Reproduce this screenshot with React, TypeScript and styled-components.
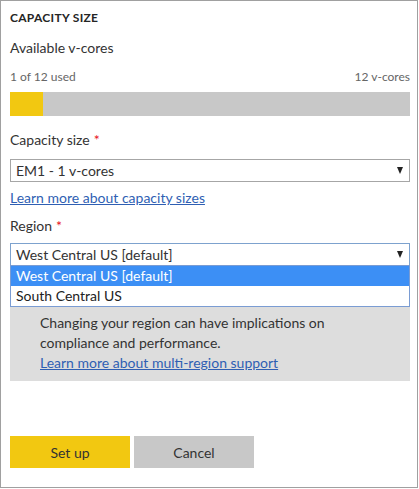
import React from "react";
import styled, { createGlobalStyle } from "styled-components";

const Global = createGlobalStyle`
  html, body { margin: 0; padding: 0; background: #ffffff; }
  body { font-family: "Segoe UI", "Lato", "Noto Sans", sans-serif; color: #333333; }
`;

const Frame = styled.div`
  box-sizing: border-box;
  width: 418px;
  height: 488px;
  border: 1px solid #a0a0a0;
  padding: 9px 7px 0 9px;
  display: flex;
  flex-direction: column;
`;

const Heading = styled.div`
  font-size: 12px;
  font-weight: 700;
  line-height: 16px;
  letter-spacing: 0.3px;
  color: #252525;
`;

const Label = styled.div<{ $mt: number }>`
  margin-top: ${(p) => p.$mt}px;
  font-size: 14px;
  line-height: 20px;
  color: #333333;
`;

const Req = styled.span`
  color: #e81123;
  margin-left: 4px;
`;

const UsageRow = styled.div`
  margin-top: 11px;
  display: flex;
  justify-content: space-between;
  font-size: 12px;
  line-height: 16px;
  color: #666666;
`;

const Bar = styled.div`
  margin-top: 7px;
  height: 24px;
  background: #c8c8c8;
  display: flex;
`;

const BarFill = styled.div`
  background: #f2c811;
  height: 100%;
`;

const Select = styled.div<{ $focus?: boolean; $mt: number }>`
  position: relative;
  box-sizing: border-box;
  margin-top: ${(p) => p.$mt}px;
  height: 23px;
  border: 1px solid ${(p) => (p.$focus ? "#7da2ce" : "#a6a6a6")};
  display: flex;
  align-items: center;
  justify-content: space-between;
  padding: 0 6px 0 5px;
  font-size: 14px;
  color: #333333;
  background: #ffffff;
`;

const Arrow = styled.span`
  width: 0;
  height: 0;
  border-left: 3.5px solid transparent;
  border-right: 3.5px solid transparent;
  border-top: 7px solid #222222;
`;

const Menu = styled.div`
  position: absolute;
  left: -1px;
  right: -1px;
  top: 100%;
  box-sizing: border-box;
  border: 1px solid #7a9cd3;
  background: #ffffff;
  z-index: 2;
`;

const Option = styled.div<{ $active?: boolean }>`
  height: 20px;
  line-height: 20px;
  padding-left: 5px;
  font-size: 14px;
  color: ${(p) => (p.$active ? "#ffffff" : "#222222")};
  background: ${(p) => (p.$active ? "#3c8ff5" : "#ffffff")};
`;

const Link = styled.a<{ $mt?: number }>`
  display: block;
  margin-top: ${(p) => p.$mt ?? 0}px;
  font-size: 14px;
  line-height: 20px;
  color: #2f5fb3;
  text-decoration: underline;
  cursor: pointer;
`;

const InfoBox = styled.div`
  margin-top: 19px;
  background: #dddddd;
  padding: 28px 10px 8px 30px;
  font-size: 14px;
  line-height: 20px;
  color: #333333;
`;

const Buttons = styled.div`
  margin-top: 55px;
  display: flex;
  gap: 4px;
`;

const Button = styled.button<{ $primary?: boolean }>`
  width: 120px;
  height: 32px;
  border: none;
  font-family: inherit;
  font-size: 14px;
  color: #333333;
  background: ${(p) => (p.$primary ? "#f2c811" : "#c8c8c8")};
  cursor: pointer;
`;

export default function App() {
  return (
    <>
      <Global />
      <Frame>
        <Heading>CAPACITY SIZE</Heading>
        <Label $mt={12}>Available v-cores</Label>
        <UsageRow>
          <span>1 of 12 used</span>
          <span>12 v-cores</span>
        </UsageRow>
        <Bar>
          <BarFill style={{ width: `${(1 / 12) * 100}%` }} />
        </Bar>
        <Label $mt={14}>
          Capacity size<Req>*</Req>
        </Label>
        <Select $mt={9}>
          <span>EM1 - 1 v-cores</span>
          <Arrow />
        </Select>
        <Link $mt={6}>Learn more about capacity sizes</Link>
        <Label $mt={8}>
          Region<Req>*</Req>
        </Label>
        <Select $mt={7} $focus>
          <span>West Central US [default]</span>
          <Arrow />
          <Menu>
            <Option $active>West Central US [default]</Option>
            <Option>South Central US</Option>
          </Menu>
        </Select>
        <InfoBox>
          <div>Changing your region can have implications on</div>
          <div>compliance and performance.</div>
          <Link>Learn more about multi-region support</Link>
        </InfoBox>
        <Buttons>
          <Button $primary>Set up</Button>
          <Button>Cancel</Button>
        </Buttons>
      </Frame>
    </>
  );
}
